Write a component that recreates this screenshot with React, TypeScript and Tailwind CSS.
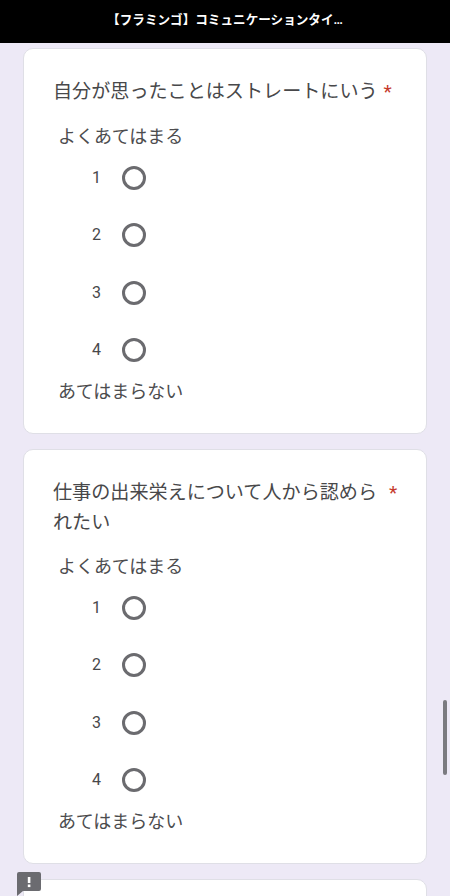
const font = { fontFamily: '"Roboto", "Noto Sans CJK JP", sans-serif' };

function Question({ title, wrapped }: { title: string; wrapped?: boolean }) {
  return (
    <div className="rounded-[10px] border border-[#dfdfe6] bg-white pl-[29px] pr-[28px] pt-[28px] pb-[26px]">
      <div className="flex items-start text-[19.1px] leading-[30px] text-[#48484a]">
        <span className={wrapped ? "w-[336px]" : ""}>{title}</span>
        <span className={wrapped ? "text-[#c5392b]" : "ml-[6px] text-[#c5392b]"}>*</span>
      </div>
      <div className={`${wrapped ? "mt-[14px]" : "mt-[15px]"} pl-[5px] text-[18px] leading-[30px] text-[#4c4c4e]`}>よくあてはまる</div>
      <div className="mt-[-3px] flex flex-col">
        {[1, 2, 3, 4].map((n) => (
          <div key={n} className="flex h-[57.5px] items-center pl-[39px]">
            <span className="w-[17px] text-[16px] text-[#48484a]">{n}</span>
            <span className="ml-[13px] h-[24px] w-[24px] rounded-full border-[3px] border-[#6b6b6f]" />
          </div>
        ))}
      </div>
      <div className="mt-[-2px] pl-[5px] text-[18px] leading-[30px] text-[#4c4c4e]">あてはまらない</div>
    </div>
  );
}

export default function App() {
  return (
    <div className="relative h-[896px] w-[450px] overflow-hidden bg-[#ede9f6]" style={font}>
      <div className="flex h-[43px] items-center justify-center bg-black pb-[3px] text-[12.6px] font-bold text-white">
        【フラミンゴ】コミュニケーションタイ…
      </div>
      <div className="flex flex-col gap-[15px] pl-[23px] pr-[23px] pt-[5px]">
        <Question title="自分が思ったことはストレートにいう" />
        <Question title="仕事の出来栄えについて人から認められたい" wrapped />
        <div className="h-[60px] rounded-[10px] border border-[#dfdfe6] bg-white" />
      </div>
      <div className="absolute left-[443px] top-[700px] h-[75px] w-[4px] rounded-full bg-[#7b7b80]" />
      <svg className="absolute left-[17px] top-[872px]" width="24" height="24" viewBox="0 0 24 24">
        <path d="M2 0h20a2 2 0 0 1 2 2v15a2 2 0 0 1-2 2H6l-6 5V2a2 2 0 0 1 2-2z" fill="#6b6b70" />
        <rect x="10.8" y="5" width="2.6" height="6" fill="#ffffff" />
        <rect x="10.8" y="12.5" width="2.6" height="2.6" fill="#ffffff" />
      </svg>
    </div>
  );
}
